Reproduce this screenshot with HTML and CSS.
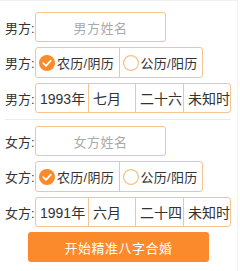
FILE: index.html
```html
<!DOCTYPE html>
<html lang="zh">
<head>
<meta charset="utf-8">
<link rel="stylesheet" href="styles.css">
</head>
<body>
<div class="page">
  <div class="row row-name">
    <span class="label">男方:</span>
    <div class="box name-box">男方姓名</div>
  </div>
  <div class="row row-radio">
    <span class="label">男方:</span>
    <div class="box radio-box">
      <div class="opt">
        <svg class="ico" viewBox="0 0 16 16" width="16" height="16"><circle cx="8" cy="8" r="8" fill="#f98b2b"/><path d="M4.3 8.2 L7 10.8 L11.8 5.6" fill="none" stroke="#fff" stroke-width="1.8" stroke-linecap="round" stroke-linejoin="round"/></svg>
        <span>农历/阴历</span>
      </div>
      <div class="opt">
        <svg class="ico" viewBox="0 0 16 16" width="16" height="16"><circle cx="8" cy="8" r="7.4" fill="#fff" stroke="#f3c28e" stroke-width="1.2"/></svg>
        <span>公历/阳历</span>
      </div>
    </div>
  </div>
  <div class="row row-date">
    <span class="label">男方:</span>
    <div class="box date-box">
      <div class="cell c1">1993年</div>
      <div class="cell c2">七月</div>
      <div class="cell c3">二十六</div>
      <div class="cell c4">未知时</div>
    </div>
  </div>
  <div class="sep"></div>
  <div class="row row-name">
    <span class="label">女方:</span>
    <div class="box name-box">女方姓名</div>
  </div>
  <div class="row row-radio">
    <span class="label">女方:</span>
    <div class="box radio-box">
      <div class="opt">
        <svg class="ico" viewBox="0 0 16 16" width="16" height="16"><circle cx="8" cy="8" r="8" fill="#f98b2b"/><path d="M4.3 8.2 L7 10.8 L11.8 5.6" fill="none" stroke="#fff" stroke-width="1.8" stroke-linecap="round" stroke-linejoin="round"/></svg>
        <span>农历/阴历</span>
      </div>
      <div class="opt">
        <svg class="ico" viewBox="0 0 16 16" width="16" height="16"><circle cx="8" cy="8" r="7.4" fill="#fff" stroke="#f3c28e" stroke-width="1.2"/></svg>
        <span>公历/阳历</span>
      </div>
    </div>
  </div>
  <div class="row row-date">
    <span class="label">女方:</span>
    <div class="box date-box">
      <div class="cell c1">1991年</div>
      <div class="cell c2">六月</div>
      <div class="cell c3">二十四</div>
      <div class="cell c4">未知时</div>
    </div>
  </div>
  <div class="btn-wrap">
    <div class="btn">开始精准八字合婚</div>
  </div>
</div>
</body>
</html>
```
FILE: styles.css
```css
html, body {
  margin: 0;
  padding: 0;
  background: #fff;
}
body {
  font-family: "Liberation Sans", "Noto Sans CJK SC", sans-serif;
  color: #333;
  font-size: 13px;
}
.page {
  width: 238px;
  height: 271px;
  box-sizing: border-box;
  border-top: 1px solid #f1f1f1;
  border-right: 1px solid #f3f3f3;
  padding: 11px 0 0 5px;
  display: flex;
  flex-direction: column;
  gap: 5px;
}
.row {
  display: flex;
  align-items: center;
}
.label {
  width: 30px;
  font-size: 13px;
  color: #333;
  white-space: nowrap;
}
.box {
  box-sizing: border-box;
  border: 1px solid #f6c48e;
  border-radius: 3px;
  background: #fff;
}
.row-name .box, .row-date .box { height: 30px; }
.row-radio .box { height: 31px; }
.name-box {
  width: 131px;
  display: flex;
  align-items: center;
  justify-content: center;
  color: #aaa;
  font-size: 13px;
  letter-spacing: 0.5px;
}
.radio-box {
  width: 168px;
  display: flex;
}
.opt {
  flex: 1;
  display: flex;
  align-items: center;
  padding-left: 3px;
  gap: 2px;
  font-size: 13px;
  color: #333;
  letter-spacing: 0.3px;
}
.opt + .opt { border-left: 1px solid #f6c48e; }
.ico { flex: none; }
.date-box {
  width: 196px;
  display: flex;
}
.cell {
  display: flex;
  align-items: center;
  padding-left: 4px;
  font-size: 14px;
  color: #333;
  box-sizing: border-box;
}
.cell + .cell { border-left: 1px solid #f6c48e; }
.c1 { width: 52px; }
.c2 { width: 47px; }
.c3 { width: 48px; }
.c4 { flex: 1; }
.sep {
  width: 226px;
  height: 1px;
  background: #eaeaea;
  margin: 1px 0 1px 0;
}
.btn-wrap {
  display: flex;
  padding-left: 23px;
}
.btn {
  width: 181px;
  height: 30px;
  border-radius: 3px;
  background: #fa8a2b;
  color: #fff;
  font-size: 13px;
  display: flex;
  align-items: center;
  justify-content: center;
  letter-spacing: 0.5px;
}
```
